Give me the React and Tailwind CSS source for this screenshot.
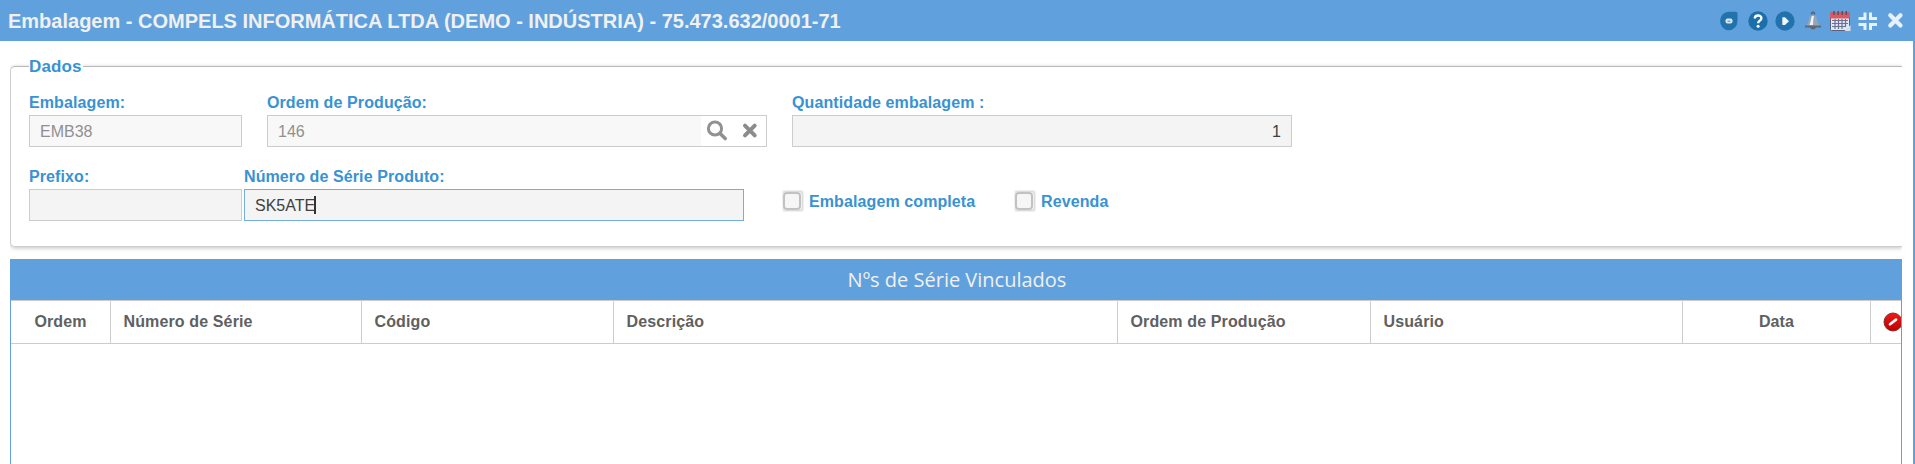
const Cell = ({ w, center, children }) => (
  <div className={`${w} ${center ? "text-center" : "pl-[12.5px]"} h-full shrink-0 border-r border-[#ccc] leading-[41px]`}>{children}</div>
);

const Label = ({ children }) => <div className="h-[26px] whitespace-nowrap pt-px leading-[26px] tracking-[0.1px]">{children}</div>;

const Check = ({ children }) => (
  <label className="flex h-[22px] items-center gap-[5px]">
    <span className="h-[22px] w-[22px] rounded-[2px] border border-[#f0f0f0] bg-[#f0f0f0]">
      <span className="block h-5 w-5 rounded-[3px] border border-l-0 border-[#dcdcdc]">
        <span className="block h-[18px] w-[18px] rounded-[4px] border-2 border-[#c2c2c2] bg-[#f6f6f6]" />
      </span>
    </span>
    <span className="whitespace-nowrap pt-[2px] tracking-[0.1px]">{children}</span>
  </label>
);

const HeaderIcons = () => (
  <svg width="195" height="30" viewBox="1715 6 195 30" className="shrink-0">
    <path d="M1729 11.800h6.500q2 0 2 2v7.200a8.700 9.200 0 1 1-8.500-9.200z" fill="#2272ae" />
    <rect x="1725.500" y="18.500" width="7" height="5" rx="2" fill="#dce9f4" />
    <path d="M1727.500 21.200h3" stroke="#5e93bf" strokeWidth="1.200" />
    <circle cx="1758" cy="21" r="9.700" fill="#1d6fa9" />
    <path d="M1754.800 18.500c0-4 6.600-4 6.600-.3 0 2.400-3.300 2.400-3.300 5" fill="none" stroke="#fff" strokeWidth="2.400" />
    <circle cx="1758.100" cy="26.200" r="1.500" fill="#fff" />
    <circle cx="1785" cy="21" r="9.700" fill="#2272ae" />
    <path d="M1782.300 17.300h2.700l4 3.900-4 3.900h-2.700z" fill="#f0f5fa" />
    <path d="M1805.500 26c3.500-3 3.200-5.500 3.700-8 1-4.500 6.600-4.500 7.600 0 .5 2.500.2 5 3.700 8z" fill="#93a5b6" />
    <path d="M1809.500 25c1.500-3 1.200-7 2.500-9h2c-.8 3-.8 6-1 9z" fill="#eef3f7" />
    <path d="M1811.500 14.500c0-3 3-3 3 0" fill="none" stroke="#56616b" strokeWidth="1.500" />
    <path d="M1805 25.500h16v2h-5c-1 2.500-5 2.500-6 0h-5z" fill="#5f6973" />
    <rect x="1830.500" y="13" width="19" height="17.500" rx="1" fill="#e0e7f1" stroke="#5d6178" />
    <path d="M1830 12.500h20v6h-20z" fill="#dc5862" />
    <path d="M1834 11v4M1838.200 11v4M1842.200 11v4M1846.300 11v4" stroke="#64464f" strokeWidth="1.300" />
    <path d="M1832 20.500h16M1832 23.500h16M1832 26.500h14M1835 19v10M1838.500 19v10M1842 19v10M1845.500 19v8" stroke="#6a7298" strokeWidth="1.200" />
    <path d="M1844.500 31l6-6v6z" fill="#d7dfe9" />
    <path d="M1865 12.500v6h-6.500M1870.500 12.500v6h6.500M1858.500 24.500h6.500v5.500M1877 24.500h-6.500v5.500" fill="none" stroke="#e8f0fa" strokeWidth="3" />
    <path d="M1890.300 15.300l10.200 10.200M1900.500 15.300l-10.200 10.200" stroke="#e8f0fa" strokeWidth="4.200" strokeLinecap="round" />
  </svg>
);

const LookupIcons = () => (
  <svg width="65" height="30" viewBox="701 116 65 30" className="shrink-0">
    <circle cx="715" cy="128.500" r="6.600" fill="none" stroke="#919191" strokeWidth="3" />
    <path d="M720 133.500l5.200 5" stroke="#919191" strokeWidth="3.600" strokeLinecap="round" />
    <path d="M745 125.700l9.700 9.700M754.700 125.700l-9.700 9.700" stroke="#8c8c8c" strokeWidth="4" strokeLinecap="round" />
  </svg>
);

const RemoveIcon = () => (
  <svg width="20" height="20" viewBox="0 0 20 20" className="shrink-0">
    <defs>
      <linearGradient id="remove" x1="0" y1="0" x2="0" y2="1">
        <stop offset="0" stopColor="#f01818" />
        <stop offset="1" stopColor="#c00000" />
      </linearGradient>
    </defs>
    <circle cx="10" cy="10" r="9" fill="url(#remove)" stroke="#7d3030" strokeWidth="1" />
    <path d="M7 12.200l6-4.600" stroke="#fff" strokeWidth="2.700" strokeLinecap="round" />
  </svg>
);

export default function App() {
  return (
    <div className="flex h-[464px] w-[1915px] flex-col overflow-hidden bg-white font-['Liberation_Sans',sans-serif]">
      <header className="flex h-[41px] shrink-0 items-center justify-between bg-[#60a1dd] pl-2 pr-[5px] font-bold text-[#f0f0f0]">
        <h1 className="text-[20px]">Embalagem - COMPELS INFORMÁTICA LTDA (DEMO - INDÚSTRIA) - 75.473.632/0001-71</h1>
        <HeaderIcons />
      </header>
      <main className="flex grow flex-col border-r-2 border-[#60a1dd] pl-[10px] pr-[11px] pt-[25px]">
        <section className="h-[181px] shrink-0 rounded-l-[5px] border border-r-0 border-[#ccc] border-t-[#b8b8b8] pl-[18px] text-[16px] font-bold text-[#3892d3] shadow-[0_1px_4px_rgba(0,0,0,0.25)] [clip-path:inset(-13px_0_-8px_0)]">
          <h2 className="-mt-[12px] h-[24px] w-[54px] bg-white text-[17px] leading-[24px] tracking-[0.15px]">Dados</h2>
          <div className="mt-[10px] flex">
            <div className="w-[238px]">
              <Label>Embalagem:</Label>
              <div className="h-8 w-[213px] border border-[#ccc] bg-[#f8f8f8] pl-[10px] font-normal leading-[31px] text-[#909090]">EMB38</div>
            </div>
            <div className="w-[525px]">
              <Label>Ordem de Produção:</Label>
              <div className="flex h-8 w-[500px] border border-[#ccc] font-normal leading-[31px] text-[#909090]">
                <div className="w-[433px] bg-[#f8f8f8] pl-[10px]">146</div>
                <LookupIcons />
              </div>
            </div>
            <div>
              <Label>Quantidade embalagem :</Label>
              <div className="h-8 w-[500px] border border-[#ccc] bg-[#f4f4f4] pr-[10px] text-right font-normal leading-[31px] text-[#404040]">1</div>
            </div>
          </div>
          <div className="mt-4 flex">
            <div className="w-[215px]">
              <Label>Prefixo:</Label>
              <div className="h-8 w-[213px] border border-[#ccc] bg-[#f4f4f4]" />
            </div>
            <div className="w-[538px]">
              <Label>Número de Série Produto:</Label>
              <div className="flex h-8 w-[500px] items-center border border-[#72aee0] bg-[#f4f4f4] pl-[10px] font-normal text-[#404040]">
                <span className="-mr-px pt-px">SK5ATE</span>
                <span className="h-[18px] w-[2px] bg-[#333]" />
              </div>
            </div>
            <div className="flex pt-[27px]">
              <div className="w-[232px]">
                <Check>Embalagem completa</Check>
              </div>
              <Check>Revenda</Check>
            </div>
          </div>
        </section>
        <section className="mt-3 flex grow flex-col overflow-hidden border-x border-[#60a1dd]">
          <h2 className="-mx-px h-[41px] bg-[#60a1dd] pl-[2px] text-center font-['Open_Sans',sans-serif] text-[20px] leading-[41px] text-[#f0f0f0]">Nºs de Série Vinculados</h2>
          <div className="flex h-11 border-y border-[#ccc] text-[16px] font-bold tracking-[0.13px] text-[#606060]">
            <Cell w="w-[100px]" center>Ordem</Cell>
            <Cell w="w-[251px]">Número de Série</Cell>
            <Cell w="w-[252px]">Código</Cell>
            <Cell w="w-[504px]">Descrição</Cell>
            <Cell w="w-[253px]">Ordem de Produção</Cell>
            <Cell w="w-[312px]">Usuário</Cell>
            <Cell w="w-[188px]" center>Data</Cell>
            <div className="flex h-full w-[30px] items-center overflow-hidden pl-3">
              <RemoveIcon />
            </div>
          </div>
        </section>
      </main>
    </div>
  );
}
